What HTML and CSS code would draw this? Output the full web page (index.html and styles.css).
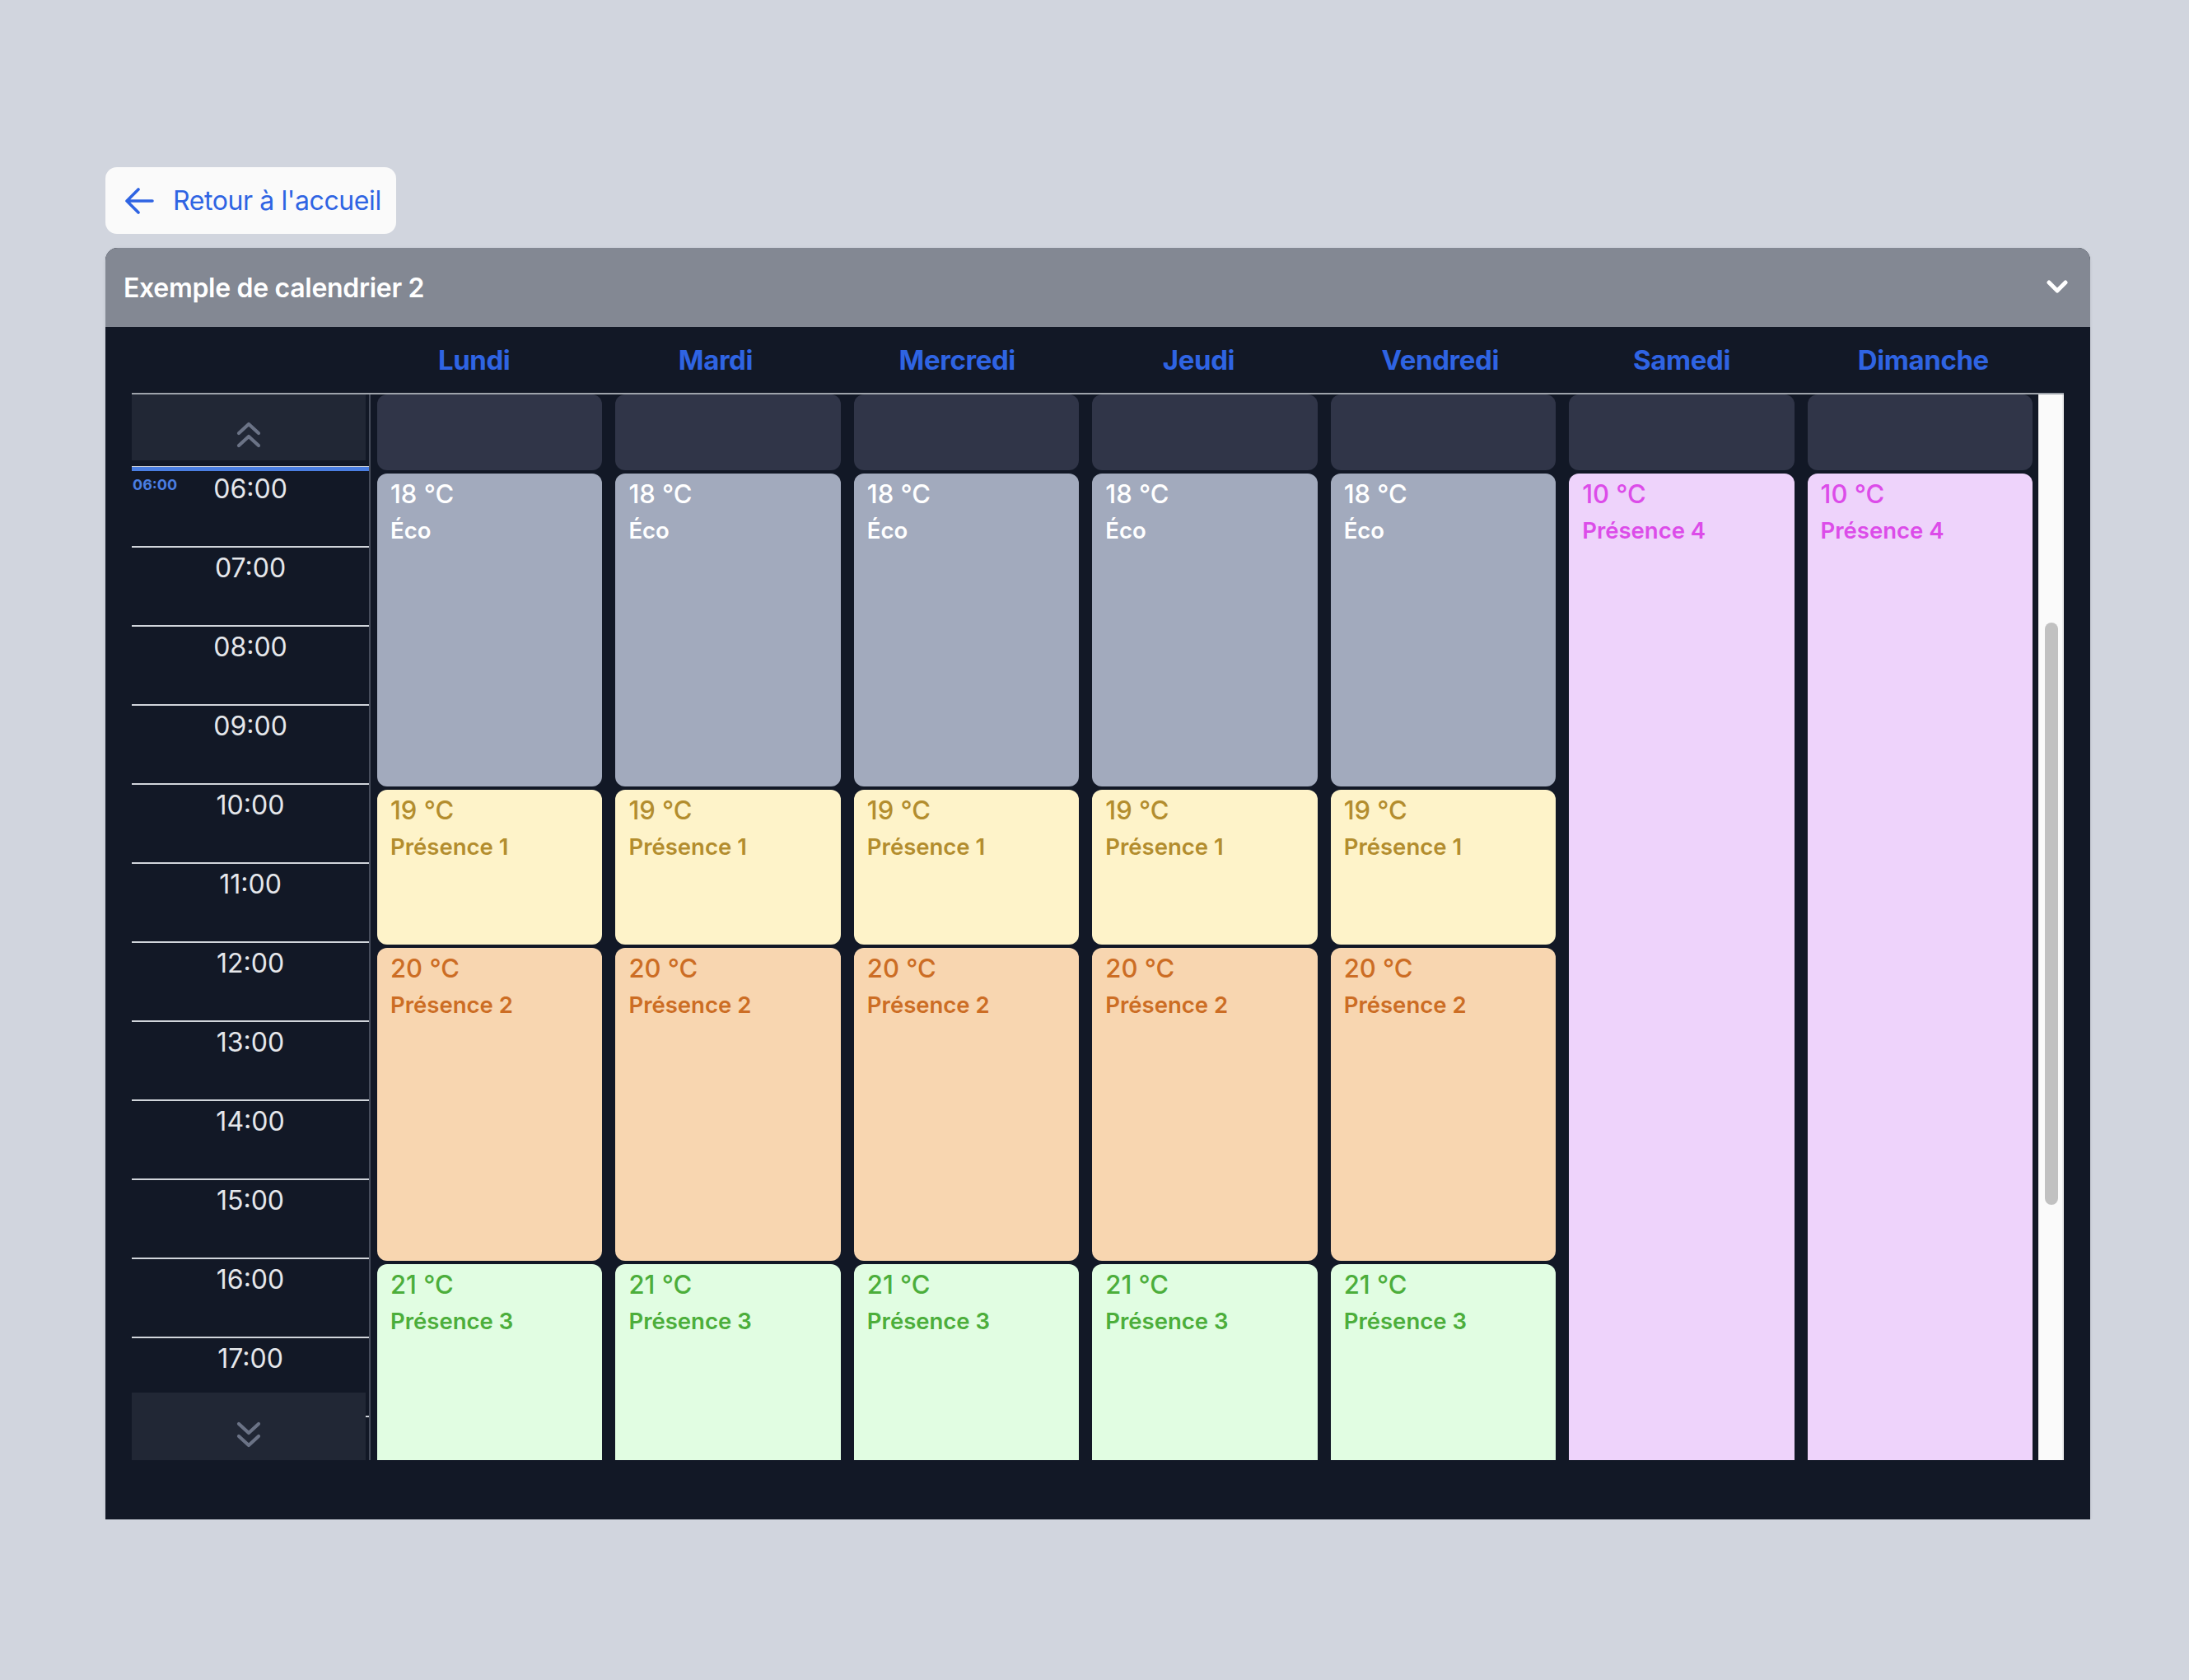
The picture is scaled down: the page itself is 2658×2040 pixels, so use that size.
FILE: index.html
```html
<!DOCTYPE html>
<html lang="fr">
<head>
  <meta charset="UTF-8" />
  <meta name="viewport" content="width=device-width, initial-scale=1.0" />
  <title>Exemple de calendrier 2</title>
  <link rel="stylesheet" href="styles.css">
</head>
<body>
  <div class="page">
    <a class="back-link" href="#">
      <svg class="back-icon" width="36" height="36" viewBox="0 0 36 36">
        <path d="M17 4 L3 18 L17 32 M3 18 H34" />
      </svg>
      <span>Retour à l'accueil</span>
    </a>

    <div class="panel">
      <div class="panel-head">
        <span class="panel-title">Exemple de calendrier 2</span>
        <svg class="toggle-icon" width="26" height="18" viewBox="0 0 26 18">
          <polyline points="3,3 13,13 23,3" />
        </svg>
      </div>

      <div class="panel-body">
        <div class="day-names">
          <span></span>
          <span>Lundi</span>
          <span>Mardi</span>
          <span>Mercredi</span>
          <span>Jeudi</span>
          <span>Vendredi</span>
          <span>Samedi</span>
          <span>Dimanche</span>
          <span></span>
        </div>

        <div class="cal-body">
          <!-- hours -->
          <div class="time-col">
            <div class="scroll-btn up">
              <svg width="30" height="34" viewBox="0 0 30 34">
                <polyline points="3,15 15,4 27,15" />
                <polyline points="3,30 15,19 27,30" />
              </svg>
            </div>
            <div class="hour now"><span class="now-label">06:00</span>06:00</div>
            <div class="hour">07:00</div>
            <div class="hour">08:00</div>
            <div class="hour">09:00</div>
            <div class="hour">10:00</div>
            <div class="hour">11:00</div>
            <div class="hour">12:00</div>
            <div class="hour">13:00</div>
            <div class="hour">14:00</div>
            <div class="hour">15:00</div>
            <div class="hour">16:00</div>
            <div class="hour">17:00</div>
            <div class="hour">18:00</div>
            <div class="scroll-btn down">
              <svg width="30" height="34" viewBox="0 0 30 34">
                <polyline points="3,4 15,15 27,4" />
                <polyline points="3,19 15,30 27,19" />
              </svg>
            </div>
          </div>

          <!-- days -->
          <div class="days">
            <div class="day-col">
              <div class="slot empty"></div>
              <div class="slot eco span-4"><div class="temp">18 °C</div><div class="name">Éco</div></div>
              <div class="slot p1 span-2"><div class="temp">19 °C</div><div class="name">Présence 1</div></div>
              <div class="slot p2 span-4"><div class="temp">20 °C</div><div class="name">Présence 2</div></div>
              <div class="slot p3 span-8"><div class="temp">21 °C</div><div class="name">Présence 3</div></div>
            </div>
            <div class="day-col">
              <div class="slot empty"></div>
              <div class="slot eco span-4"><div class="temp">18 °C</div><div class="name">Éco</div></div>
              <div class="slot p1 span-2"><div class="temp">19 °C</div><div class="name">Présence 1</div></div>
              <div class="slot p2 span-4"><div class="temp">20 °C</div><div class="name">Présence 2</div></div>
              <div class="slot p3 span-8"><div class="temp">21 °C</div><div class="name">Présence 3</div></div>
            </div>
            <div class="day-col">
              <div class="slot empty"></div>
              <div class="slot eco span-4"><div class="temp">18 °C</div><div class="name">Éco</div></div>
              <div class="slot p1 span-2"><div class="temp">19 °C</div><div class="name">Présence 1</div></div>
              <div class="slot p2 span-4"><div class="temp">20 °C</div><div class="name">Présence 2</div></div>
              <div class="slot p3 span-8"><div class="temp">21 °C</div><div class="name">Présence 3</div></div>
            </div>
            <div class="day-col">
              <div class="slot empty"></div>
              <div class="slot eco span-4"><div class="temp">18 °C</div><div class="name">Éco</div></div>
              <div class="slot p1 span-2"><div class="temp">19 °C</div><div class="name">Présence 1</div></div>
              <div class="slot p2 span-4"><div class="temp">20 °C</div><div class="name">Présence 2</div></div>
              <div class="slot p3 span-8"><div class="temp">21 °C</div><div class="name">Présence 3</div></div>
            </div>
            <div class="day-col">
              <div class="slot empty"></div>
              <div class="slot eco span-4"><div class="temp">18 °C</div><div class="name">Éco</div></div>
              <div class="slot p1 span-2"><div class="temp">19 °C</div><div class="name">Présence 1</div></div>
              <div class="slot p2 span-4"><div class="temp">20 °C</div><div class="name">Présence 2</div></div>
              <div class="slot p3 span-8"><div class="temp">21 °C</div><div class="name">Présence 3</div></div>
            </div>
            <div class="day-col">
              <div class="slot empty"></div>
              <div class="slot p4 span-18"><div class="temp">10 °C</div><div class="name">Présence 4</div></div>
            </div>
            <div class="day-col">
              <div class="slot empty"></div>
              <div class="slot p4 span-18"><div class="temp">10 °C</div><div class="name">Présence 4</div></div>
            </div>
          </div>

          <div class="scrollbar"><div class="thumb"></div></div>
        </div>
      </div>
    </div>
  </div>
</body>
</html>
```

FILE: styles.css
```css
body {
  margin: 0;
  background: #d1d5de;
  font-family: Inter, "Noto Sans", "Liberation Sans", sans-serif;
}
.page {
  width: 2410px;
  padding: 203px 0 0 128px;
}
.back-link {
  display: inline-flex;
  align-items: center;
  gap: 23px;
  height: 81px;
  box-sizing: border-box;
  padding: 0 18px 0 23px;
  background: #fafafa;
  border-radius: 14px;
  color: #2f64e3;
  font-size: 32px;
  letter-spacing: -0.4px;
  text-decoration: none;
}
.back-icon path {
  fill: none;
  stroke: #2f64e3;
  stroke-width: 3.6;
  stroke-linecap: round;
  stroke-linejoin: round;
}
.panel {
  margin-top: 17px;
  background: #121826;
  border-radius: 15px 15px 0 0;
  box-shadow: 0 1px 4px rgba(0, 0, 0, 0.08);
}
.panel-head {
  height: 96px;
  display: flex;
  align-items: center;
  justify-content: space-between;
  padding: 0 27px 0 22px;
  background: #838893;
  border-radius: 15px 15px 0 0;
}
.panel-title {
  color: #fff;
  font-size: 32px;
  font-weight: 600;
  letter-spacing: -0.3px;
}
.toggle-icon polyline {
  fill: none;
  stroke: #fff;
  stroke-width: 5;
  stroke-linecap: round;
  stroke-linejoin: round;
}
.panel-body {
  padding: 0 32px 72px;
}
.day-names {
  display: grid;
  grid-template-columns: 269px repeat(7, 1fr) 24px;
  align-items: center;
  height: 80px;
  border-bottom: 2px solid #9ea3ab;
  color: #2f64e3;
  font-size: 33px;
  font-weight: 700;
  letter-spacing: -0.4px;
  text-align: center;
}
.cal-body {
  display: flex;
  height: 1294px;
}

/* time column */
.time-col {
  position: relative;
  width: 290px;
  flex: none;
  box-sizing: border-box;
  border-right: 2px solid #474d5c;
  overflow: hidden;
}
.scroll-btn {
  width: 284px;
  height: 80px;
  box-sizing: border-box;
  display: flex;
  justify-content: center;
  align-items: flex-end;
  padding-bottom: 14px;
  background: #212735;
}
.scroll-btn.up {
  margin-bottom: 8px;
}
.scroll-btn.down {
  position: absolute;
  left: 0;
  bottom: 0;
  height: 82px;
}
.scroll-btn polyline {
  fill: none;
  stroke: #6b7386;
  stroke-width: 4.2;
  stroke-linecap: round;
  stroke-linejoin: round;
}
.hour {
  height: 96px;
  box-sizing: border-box;
  border-top: 2px solid #d1d5db;
  padding-top: 5px;
  color: #e5e7eb;
  font-size: 32px;
  line-height: 40px;
  text-align: center;
}
.hour.now {
  position: relative;
  border-top: 5px solid #4a7ee2;
  box-shadow: 0 -1px 0 #cfd4dc;
  padding-top: 2px;
}
.now-label {
  position: absolute;
  left: 1px;
  top: 8px;
  color: #4a7ee2;
  font-size: 18px;
  font-weight: 700;
  line-height: 18px;
}

/* day columns */
.days {
  flex: 1;
  margin-left: 8px;
  display: grid;
  grid-template-columns: repeat(7, 1fr);
  column-gap: 16px;
  align-items: start;
  overflow: hidden;
}
.day-col {
  display: grid;
  grid-template-rows: 94px;
  grid-auto-rows: 96px;
}
.slot {
  margin: 2px 0;
  padding: 5px 16px;
  border-radius: 12px;
}
.slot.empty {
  margin-top: 0;
  background: #303548;
}
.span-2 { grid-row: span 2; }
.span-4 { grid-row: span 4; }
.span-8 { grid-row: span 8; }
.span-18 { grid-row: span 18; }
.temp {
  font-size: 31px;
  font-weight: 500;
  line-height: 40px;
}
.name {
  margin-top: 4px;
  font-size: 27.5px;
  font-weight: 600;
  line-height: 40px;
}
.eco { background: #a2aabd; color: #fff; }
.p1 { background: #fef3c9; color: #b38d2e; }
.p2 { background: #f8d6b0; color: #cc6d24; }
.p3 { background: #e1fde2; color: #4cae3b; }
.p4 { background: #eed3fb; color: #dc4ce9; }

/* fake scrollbar */
.scrollbar {
  width: 31px;
  flex: none;
  margin-left: 7px;
  box-sizing: border-box;
  padding-top: 277px;
  background: #fafafa;
  border-left: 1px solid #ebebeb;
  border-right: 2px solid #ececec;
}
.thumb {
  width: 16px;
  height: 707px;
  margin-left: 7px;
  border-radius: 8px;
  background: #c1c1c1;
}
```
